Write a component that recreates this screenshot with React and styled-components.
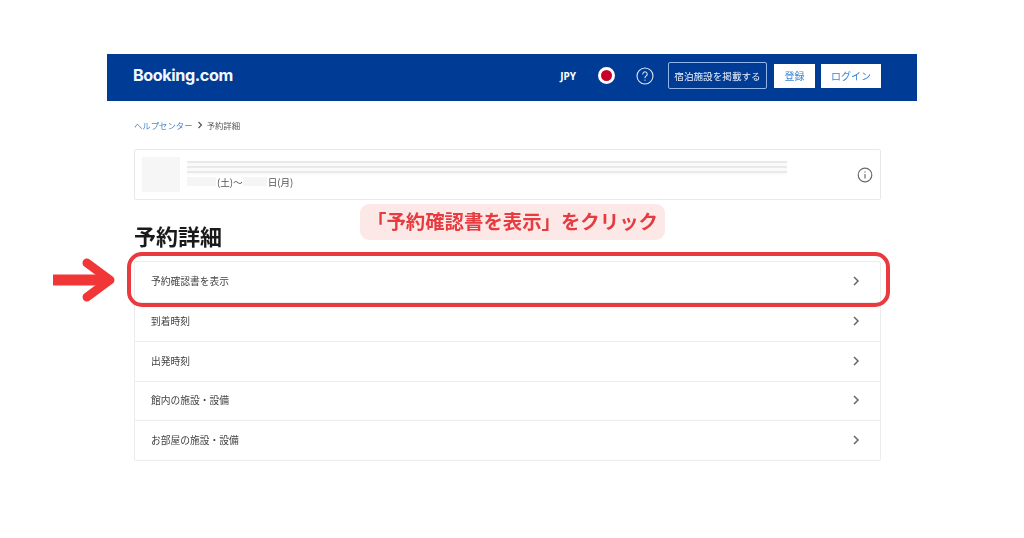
import React from "react";
import styled, { createGlobalStyle } from "styled-components";

const Global = createGlobalStyle`
  html, body { margin: 0; padding: 0; background: #fff; }
  body { font-family: "Noto Sans CJK JP", "Noto Sans", sans-serif; color: #333; }
  * { box-sizing: border-box; }
`;

const Page = styled.div`
  position: relative;
  width: 1024px;
  height: 538px;
  padding: 54px 107px 0;
  overflow: hidden;
  filter: blur(0.35px);
`;

const Frame = styled.div`
  width: 810px;
`;

const Header = styled.header`
  height: 47px;
  background: #003b95;
  display: flex;
  align-items: center;
  padding: 0 36px 4px 26px;
`;

const Logo = styled.div`
  font-family: Inter, "Noto Sans", sans-serif;
  font-size: 16.2px;
  font-weight: 700;
  letter-spacing: -0.4px;
  color: #f2f8ff;
  margin-right: auto;
  padding-bottom: 1px;
`;

const Currency = styled.span`
  font-family: "Noto Sans", sans-serif;
  font-size: 10px;
  font-weight: 700;
  color: #fff;
  margin-right: 22px;
  margin-left: -2px;
`;

const Flag = styled.span`
  width: 17px;
  height: 17px;
  border-radius: 50%;
  background: #c5002b;
  border: 3px solid #fff;
  margin-right: 21px;
`;

const HelpIcon = styled.svg`
  width: 18px;
  height: 18px;
  margin-right: 14px;
  display: block;
`;

const HostButton = styled.span`
  height: 27px;
  width: 99px;
  border: 1px solid #8fb6e6;
  border-radius: 2px;
  color: #eaf2fc;
  font-size: 9.6px;
  display: flex;
  align-items: center;
  justify-content: center;
  margin-right: 7px;
`;

const AuthButton = styled.span`
  height: 24px;
  width: ${(p) => p.$width}px;
  margin-right: ${(p) => p.$gap}px;
  background: #fff;
  color: #3b86d6;
  font-size: 10px;
  display: flex;
  align-items: center;
  justify-content: center;
`;

const Content = styled.main`
  padding: 0 36px 0 27px;
`;

const Crumbs = styled.nav`
  display: flex;
  align-items: center;
  height: 14px;
  margin-top: 17px;
  font-size: 8.4px;
  gap: 4px;
`;

const CrumbLink = styled.span`
  color: #4a86c5;
`;

const CrumbCurrent = styled.span`
  color: #555;
`;

const CrumbChevron = styled.svg`
  width: 6px;
  height: 8px;
  display: block;
`;

const BookingCard = styled.section`
  margin-top: 17px;
  height: 51px;
  border: 1px solid #e8e8e8;
  border-radius: 2px;
  display: flex;
  align-items: center;
  padding: 0 7px 0 7px;
`;

const Thumb = styled.div`
  width: 38px;
  height: 35px;
  background: #f6f6f6;
  margin-right: 7px;
  flex: none;
`;

const Summary = styled.div`
  width: 600px;
  margin-right: auto;
`;

const BlurredTitle = styled.div`
  height: 14px;
  background: repeating-linear-gradient(
    180deg,
    #e9e9e9 0 2px,
    #fafafa 2px 5px
  );
  filter: blur(0.5px);
`;

const DateLine = styled.div`
  display: flex;
  align-items: center;
  font-size: 9.6px;
  line-height: 14px;
  color: #555;
`;

const BlurredDate = styled.span`
  width: ${(p) => p.$width}px;
  height: 9px;
  background: #f5f5f5;
  margin-right: 1px;
`;

const InfoIcon = styled.svg`
  width: 16px;
  height: 16px;
  display: block;
  flex: none;
`;

const Title = styled.h1`
  margin: 19px 0 0;
  font-size: 22px;
  line-height: 33px;
  font-weight: 700;
  color: #1a1a1a;
`;

const List = styled.ul`
  list-style: none;
  margin: 9px 0 0;
  padding: 0;
  border: 1px solid #ececec;
  border-radius: 2px;
`;

const Row = styled.li`
  height: 39.5px;
  display: flex;
  align-items: center;
  justify-content: space-between;
  padding: 0 20px 1px 16px;
  font-size: 9.75px;
  color: #444;
  & + & {
    border-top: 1px solid #ececec;
  }
`;

const RowChevron = styled.svg`
  width: 8px;
  height: 10px;
  display: block;
`;

const Callout = styled.div`
  position: absolute;
  left: 360px;
  top: 204px;
  width: 305px;
  height: 36px;
  padding-bottom: 2px;
  border-radius: 9px;
  background: #fde8e8;
  color: #e63b3f;
  font-size: 19.4px;
  font-weight: 700;
  line-height: 34px;
  white-space: nowrap;
  text-align: center;
`;

const Highlight = styled.div`
  position: absolute;
  left: 127px;
  top: 252px;
  width: 763px;
  height: 55px;
  border: 4px solid #ea3a3e;
  border-radius: 15px;
`;

const Arrow = styled.svg`
  position: absolute;
  left: 50px;
  top: 256px;
  width: 68px;
  height: 48px;
`;

const items = ["予約確認書を表示", "到着時刻", "出発時刻", "館内の施設・設備", "お部屋の施設・設備"];

export default function App() {
  return (
    <Page>
      <Global />
      <Frame>
        <Header>
          <Logo>Booking.com</Logo>
          <Currency>JPY</Currency>
          <Flag />
          <HelpIcon viewBox="0 0 18 18" fill="none" stroke="#dbe8f8" strokeWidth="1.1" strokeLinecap="round">
            <circle cx="9" cy="9" r="8" />
            <path d="M6.8 7a2.2 2.2 0 1 1 3.4 1.9c-.8.5-1.2 1-1.2 1.9" />
            <path d="M9 13v.3" />
          </HelpIcon>
          <HostButton>宿泊施設を掲載する</HostButton>
          <AuthButton $width={41} $gap={6}>登録</AuthButton>
          <AuthButton $width={60} $gap={0}>ログイン</AuthButton>
        </Header>
        <Content>
          <Crumbs>
            <CrumbLink>ヘルプセンター</CrumbLink>
            <CrumbChevron viewBox="0 0 6 8" fill="none" stroke="#555" strokeWidth="1.2">
              <path d="M1.5 1l3 3-3 3" />
            </CrumbChevron>
            <CrumbCurrent>予約詳細</CrumbCurrent>
          </Crumbs>
          <BookingCard>
            <Thumb />
            <Summary>
              <BlurredTitle />
              <DateLine>
                <BlurredDate $width={29} />
                (土)〜
                <BlurredDate $width={24} />
                日(月)
              </DateLine>
            </Summary>
            <InfoIcon viewBox="0 0 16 16" fill="none" stroke="#6b6b6b" strokeWidth="1.2" strokeLinecap="round">
              <circle cx="8" cy="8" r="6.8" />
              <path d="M8 7.5v3.5" />
              <path d="M8 4.8v.3" />
            </InfoIcon>
          </BookingCard>
          <Title>予約詳細</Title>
          <List>
            {items.map((label) => (
              <Row key={label}>
                {label}
                <RowChevron viewBox="0 0 8 10" fill="none" stroke="#666" strokeWidth="1.5">
                  <path d="M2 1l4 4-4 4" />
                </RowChevron>
              </Row>
            ))}
          </List>
        </Content>
      </Frame>
      <Callout>「予約確認書を表示」をクリック</Callout>
      <Highlight />
      <Arrow viewBox="0 0 68 48" fill="none" stroke="#f03636" strokeLinecap="round" strokeLinejoin="round">
        <path d="M3 24h54" strokeWidth="11" strokeLinecap="butt" />
        <path d="M37 7l23 17-23 17" strokeWidth="9" />
      </Arrow>
    </Page>
  );
}
